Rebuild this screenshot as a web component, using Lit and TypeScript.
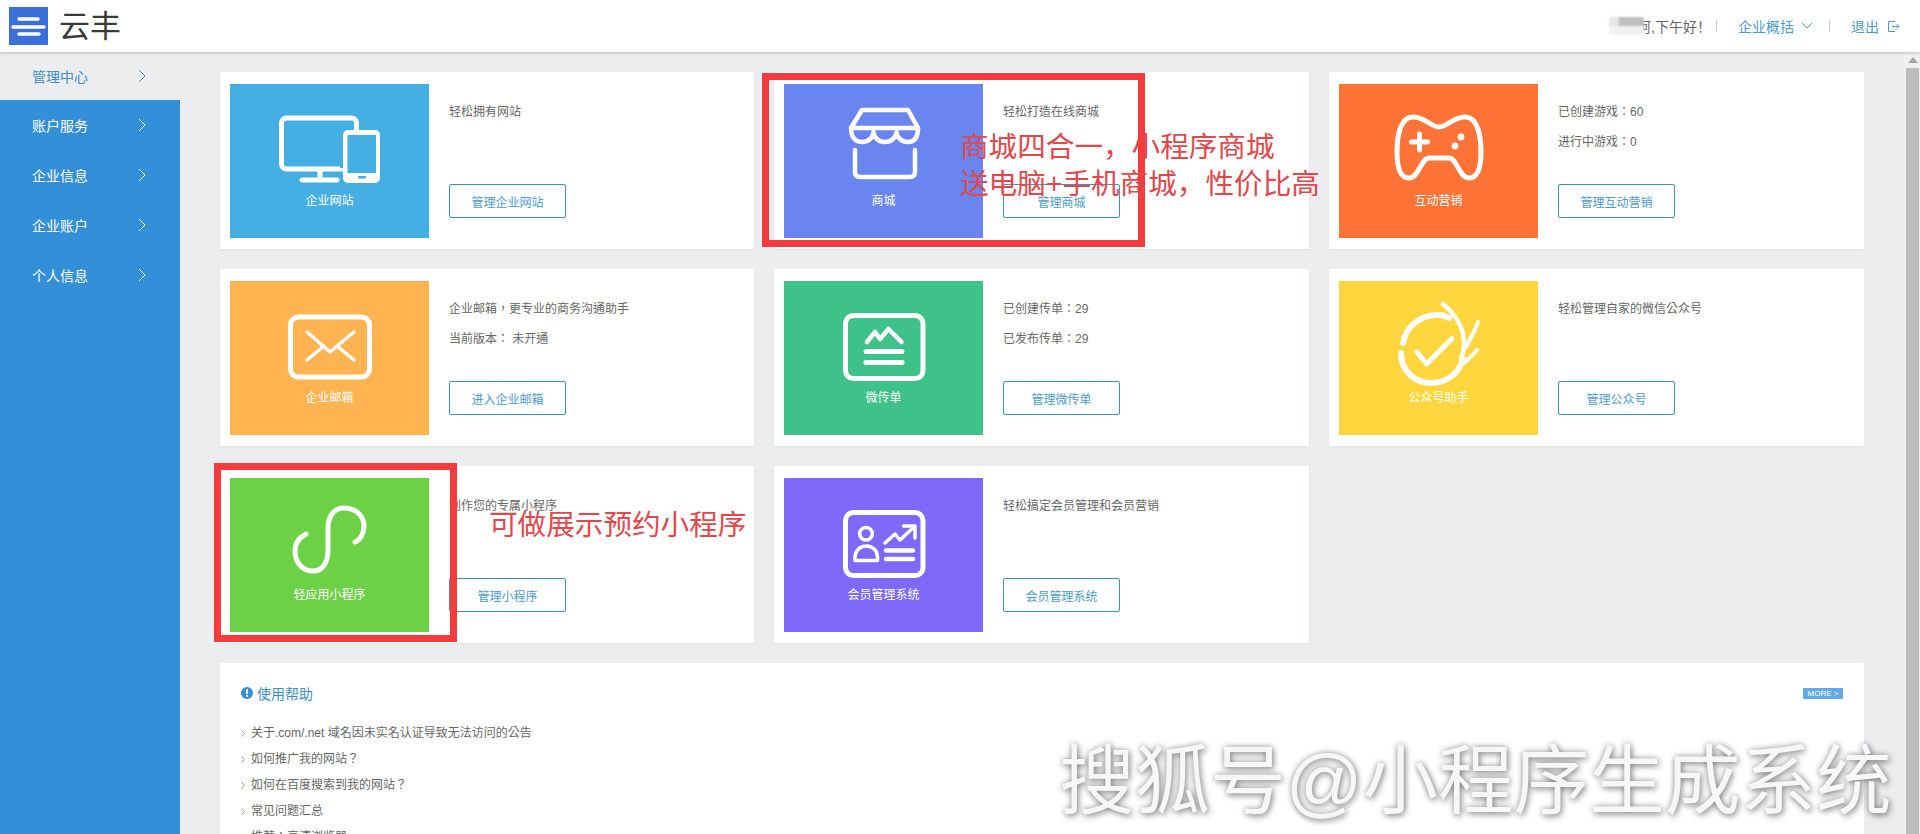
import { LitElement, html, css, svg } from "lit";
import { customElement } from "lit/decorators.js";

const chevron = html`<svg class="chev" width="8" height="14" viewBox="0 0 8 14"><path d="M1 1l6 6-6 6" fill="none" stroke="currentColor" stroke-width="1"/></svg>`;

const icons: Record<string, (bg: string) => unknown> = {
  site: (bg) => svg`
    <path d="M90 95V87M72 96H107" stroke-width="5"/>
    <rect x="51.500" y="34" width="75" height="51" rx="5" stroke-width="5"/>
    <rect x="113" y="46" width="37" height="53" rx="5" fill="#fff" stroke="none"/>
    <rect x="110" y="44" width="3" height="40" fill="${bg}" stroke="none"/>
    <rect x="117.500" y="51" width="28.500" height="38" fill="${bg}" stroke="none"/>
    <rect x="128" y="92" width="8" height="2.500" rx="1" fill="${bg}" stroke="none"/>`,
  shop: () => svg`
    <path d="M78 26H124L134 44H67Z" stroke-width="4.500"/>
    <path d="M67 44C67 54 72 58 78 58C84 58 89 54 89.500 48C90 54 95 58 101 58C107 58 112 54 112.500 48C113 54 118 58 124 58C130 58 134 54 134 44" stroke-width="4.500"/>
    <path d="M71 66V88Q71 93 76 93H126Q131 93 131 88V66" stroke-width="4.500"/>`,
  game: () => svg`
    <path d="M100 43C92 43 86 33 74 33C62 33 58 50 58 68C58 84 62 94 70 94C80 94 82 74 90 74H110C118 74 120 94 130 94C138 94 142 84 142 68C142 50 138 33 126 33C114 33 108 43 100 43Z" stroke-width="5"/>
    <path d="M80.500 50V66M72.500 58H88.500" stroke-width="5"/>
    <circle cx="122" cy="53" r="3.400" fill="#fff" stroke="none"/>
    <circle cx="116" cy="62" r="3.400" fill="#fff" stroke="none"/>`,
  mail: () => svg`
    <rect x="60.500" y="36" width="79" height="60" rx="8" stroke-width="5"/>
    <path d="M77 51L100 71L124 51M77 79L94 65M124 79L107 65" stroke-width="3.500"/>`,
  flyer: () => svg`
    <rect x="61.500" y="34.500" width="77.500" height="63" rx="8" stroke-width="5"/>
    <path d="M83 61L91 51L96 58L104.500 48L117.500 61" stroke-width="4.500"/>
    <path d="M82 70.500H118M82 81.500H118" stroke-width="5"/>`,
  wx: () => svg`
    <path d="M64 62C67 44 84 33 100 34C104 34 107 35 110 37" stroke-width="6"/>
    <path d="M104 23C116 33 125 47 125 62C125 68 124 73 122 78" stroke-width="4.500"/>
    <path d="M62 72C62 90 76 102 92 102C108 102 120 92 124 78" stroke-width="6"/>
    <path d="M138 69C132 76 128 80 122 84" stroke-width="4"/>
    <path d="M139 41C136 50 132 56 127 66" stroke-width="4"/>
    <path d="M78 71L87.500 83L113 57.500" stroke-width="5"/>`,
  mini: () => svg`
    <path d="M76 56C68 60 65 66 65 73C65 85 73 93 83 93C93 93 98 84 98 72V50C98 37 105 30 114 30C126 30 134 38 134 48C134 56 130 62 125 64" stroke-width="5"/>`,
  member: () => svg`
    <rect x="61.500" y="34.500" width="77.500" height="63" rx="8" stroke-width="5"/>
    <circle cx="82" cy="55.700" r="6.300" stroke-width="3.500"/>
    <path d="M71 82.500V79A11 11 0 0 1 82 68A11 11 0 0 1 93.500 79V82.500Z" stroke-width="3.500"/>
    <path d="M101 65L111 56L116 62L130 49M119.500 48H131V60" stroke-width="3.500"/>
    <path d="M102 72.500H129M102 81H129" stroke-width="4.500"/>`,
};

const cards = [
  { bg: "#45aee3", icon: "site", label: "企业网站", lines: ["轻松拥有网站"], btn: "管理企业网站" },
  { bg: "#6a85f0", icon: "shop", label: "商城", lines: ["轻松打造在线商城"], btn: "管理商城" },
  { bg: "#ff7337", icon: "game", label: "互动营销", lines: ["已创建游戏：60", "进行中游戏：0"], btn: "管理互动营销" },
  { bg: "#ffb351", icon: "mail", label: "企业邮箱", lines: ["企业邮箱，更专业的商务沟通助手", "当前版本： 未开通"], btn: "进入企业邮箱" },
  { bg: "#3fc28a", icon: "flyer", label: "微传单", lines: ["已创建传单：29", "已发布传单：29"], btn: "管理微传单" },
  { bg: "#ffd63e", icon: "wx", label: "公众号助手", lines: ["轻松管理自家的微信公众号"], btn: "管理公众号" },
  { bg: "#6dd145", icon: "mini", label: "轻应用小程序", lines: ["创作您的专属小程序"], btn: "管理小程序" },
  { bg: "#7e69fb", icon: "member", label: "会员管理系统", lines: ["轻松搞定会员管理和会员营销"], btn: "会员管理系统" },
];

const help = ["关于.com/.net 域名因未实名认证导致无法访问的公告", "如何推广我的网站？", "如何在百度搜索到我的网站？", "常见问题汇总", "推荐：高清浏览器"];

@customElement("app-root")
export class AppRoot extends LitElement {
  static styles = css`
    :host { display: block; width: 1920px; height: 834px; overflow: hidden; position: relative; background: #ecedef; color: #666;
      font-family: "Liberation Sans", "Noto Sans CJK SC", sans-serif; font-size: 12px; }
    * { box-sizing: border-box; }
    .tc { font-family: "Liberation Sans", "Noto Sans CJK TC", sans-serif; }
    header { height: 52px; background: #fff; box-shadow: 0 1px 3px rgba(0,0,0,.22); display: flex; align-items: center; padding-left: 9px; position: relative; z-index: 1; }
    .logo { width: 39px; height: 38px; background: #3a6fd8; display: block; }
    .brand { font-size: 31px; color: #3a3a3a; margin-left: 11px; line-height: 1; }
    .top-right { margin-left: auto; display: flex; align-items: center; font-size: 14px; padding-right: 20px; }
    .blur { width: 35px; height: 18px; border-radius: 3px; background: linear-gradient(90deg, #e6e6e6 0 30%, #bdbdbd 30% 100%); background-size: 100% 50%; background-repeat: no-repeat; background-color: #f1f1f1; filter: blur(1px); margin-right: -7px; position: relative; z-index: 1; }
    .hello { color: #666; }
    .sep { width: 1px; height: 12px; background: #ccc; }
    .sep.a { margin: 0 21px 0 5px; }
    .sep.b { margin: 0 21px 0 16px; }
    .link { color: #4a9bc8; display: flex; align-items: center; }
    .link .down { margin-left: 7px; }
    .link .exit { margin-left: 8px; }
    .body { display: flex; height: 782px; }
    .side { width: 180px; flex: none; display: flex; flex-direction: column; }
    .nav { height: 50px; display: flex; align-items: center; justify-content: space-between; padding: 0 34px 0 32px; font-size: 14px; color: #fff; }
    .nav.on { height: 48px; color: #3d8fd0; }
    .blue { flex: 1; background: #3390d8; }
    main { flex: 1; padding: 20px 39px 0 40px; overflow: hidden; }
    .grid { display: grid; grid-template-columns: 534px 535px 535px; gap: 20px; }
    .card { background: #fff; height: 177px; padding: 12px 10px 11px; display: flex; box-shadow: 0 1px 2px rgba(0,0,0,.05); }
    .pic { width: 199px; flex: none; color: #fff; text-align: center; }
    .pic svg { display: block; fill: none; stroke: #fff; stroke-linecap: round; stroke-linejoin: round; }
    .pic span { display: block; line-height: 24px; }
    .info { flex: 1; margin-left: 20px; padding: 13px 0 20px; display: flex; flex-direction: column; align-items: flex-start; }
    .line { line-height: 30px; color: #666; }
    .btn { margin-top: auto; width: 117px; height: 34px; border: 1px solid #3d93b5; border-radius: 2px; color: #4a9bcc; display: flex; align-items: center; justify-content: center; }
    .help { margin-top: 20px; background: #fff; height: 300px; padding: 19px 21px 0 21px; border-radius: 2px; }
    .help-top { display: flex; align-items: center; height: 22px; }
    .help-title { font-size: 14px; color: #3d8fc4; margin-left: 4px; }
    .more { margin-left: auto; width: 40px; height: 11px; background: #62a9e8; border-radius: 1px; color: #fff; font-size: 8px; line-height: 11px; text-align: center; }
    ul { list-style: none; margin: 16px 0 0; padding: 0; }
    li { line-height: 26px; height: 26px; display: flex; align-items: center; color: #666; }
    li svg { margin-right: 6px; color: #888; flex: none; }
    .scroll { width: 17px; flex: none; background: #f0f0f0; display: flex; flex-direction: column; align-items: center; }
    .arrow { height: 16px; display: flex; align-items: center; justify-content: center; flex: none; padding-left: 2px; }
    .thumb { flex: 1; width: 13px; background: #bdbdbd; margin-left: 2px; }
    .frame { position: absolute; border: 7px solid #f53b3b; }
    .frame.f1 { left: 762px; top: 73px; width: 383px; height: 174px; }
    .frame.f2 { left: 214px; top: 463px; width: 243px; height: 179px; }
    .note { position: absolute; color: #e2474b; font-size: 28.600px; line-height: 37px; white-space: nowrap; }
    .note.n1 { left: 960px; top: 129px; }
    .note.n2 { left: 489px; top: 507px; }
    .mark { position: absolute; left: 1059px; top: 732px; font-size: 75.600px; line-height: 100px; color: #f7f7f7; white-space: nowrap; text-shadow: 0 0 6px rgba(0,0,0,.4), 2px 3px 6px rgba(0,0,0,.28); }
  `;

  render() {
    return html`
      <header>
        <svg class="logo" viewBox="0 0 39 38"><g stroke="#fff" stroke-linecap="round"><path d="M10 12H29" stroke-width="3.500"/><path d="M4 20H35" stroke-width="3.500"/><path d="M10 27H30" stroke-width="3.500"/></g></svg>
        <span class="brand">云丰</span>
        <div class="top-right">
          <span class="blur"></span>
          <span class="hello">阿,下午好！</span>
          <span class="sep a"></span>
          <span class="link">企业概括<svg class="down" width="12" height="8" viewBox="0 0 12 8"><path d="M1 1l5 5 5-5" fill="none" stroke="currentColor"/></svg></span>
          <span class="sep b"></span>
          <span class="link">退出<svg class="exit" width="13" height="13" viewBox="0 0 13 13"><path d="M8 1.500H1.500v10H8M5 6.500h7M9.500 4l2.500 2.500L9.500 9" fill="none" stroke="currentColor"/></svg></span>
        </div>
      </header>
      <div class="body">
        <aside class="side">
          <div class="nav on">管理中心${chevron}</div>
          <div class="blue">
            ${["账户服务", "企业信息", "企业账户", "个人信息"].map((t) => html`<div class="nav">${t}${chevron}</div>`)}
          </div>
        </aside>
        <main>
          <div class="grid">
            ${cards.map((c) => html`
              <section class="card">
                <div class="pic" style="background:${c.bg}">
                  <svg width="199" height="105" viewBox="0 0 199 105">${icons[c.icon](c.bg)}</svg>
                  <span>${c.label}</span>
                </div>
                <div class="info">
                  ${c.lines.map((l) => html`<div class="line tc">${l}</div>`)}
                  <div class="btn">${c.btn}</div>
                </div>
              </section>`)}
          </div>
          <section class="help">
            <div class="help-top">
              <svg width="12" height="12" viewBox="0 0 12 12"><circle cx="6" cy="6" r="6" fill="#3390d8"/><rect x="5" y="2.300" width="2" height="4.800" fill="#fff"/><rect x="5" y="8" width="2" height="1.800" fill="#fff"/></svg>
              <span class="help-title">使用帮助</span>
              <span class="more">MORE &gt;</span>
            </div>
            <ul>
              ${help.map((h) => html`<li class="tc"><svg width="4" height="7" viewBox="0 0 4 7"><path d="M.5.5l3 3-3 3" fill="none" stroke="currentColor" stroke-width=".8"/></svg>${h}</li>`)}
            </ul>
          </section>
        </main>
        <div class="scroll">
          <div class="arrow"><svg width="10" height="6" viewBox="0 0 10 6"><path d="M5 0l5 6H0z" fill="#a6a6a6"/></svg></div>
          <div class="thumb"></div>
        </div>
      </div>
      <div class="frame f1"></div>
      <div class="note n1">商城四合一，小程序商城<br />送电脑+手机商城，性价比高</div>
      <div class="frame f2"></div>
      <div class="note n2">可做展示预约小程序</div>
      <div class="mark">搜狐号@小程序生成系统</div>
    `;
  }
}
